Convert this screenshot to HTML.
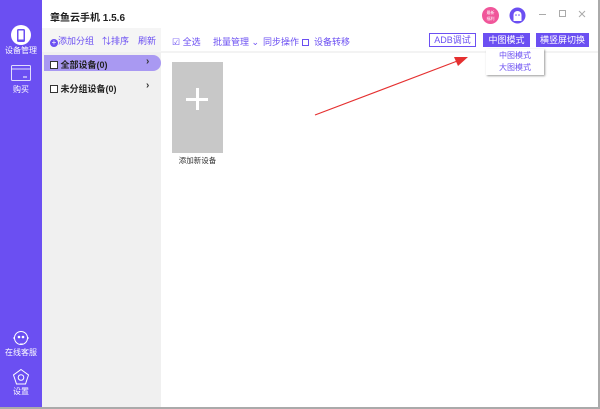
<!DOCTYPE html>
<html><head><meta charset="utf-8"><style>
*{margin:0;padding:0;box-sizing:border-box}
html,body{width:600px;height:409px;overflow:hidden}
body{position:relative;background:#fff;font-family:"Liberation Sans","Noto Sans CJK SC",sans-serif;font-size:9px;color:#333}
.abs{position:absolute}
.side{left:0;top:0;width:42px;height:409px;background:#6b4ff2}
.st{position:absolute;left:0;width:42px;text-align:center;color:#fff;font-size:8px}
.panel{left:42px;top:52px;width:119px;height:357px;background:#f0f0f0}
.tb{color:#6b4ff2;font-size:9px;white-space:nowrap}
.btn{font-size:9px;text-align:center;line-height:12px;height:14px}
</style></head><body>
<div class="abs side"></div>
<svg class="abs" style="left:10px;top:24px" width="22" height="22" viewBox="0 0 22 22"><circle cx="11" cy="11" r="10" fill="#fff"/><rect x="7" y="5" width="8" height="13" rx="1.5" fill="#6b4ff2"/><rect x="8.5" y="6.5" width="5" height="9" fill="#fff"/></svg>
<div class="st" style="top:45px">设备管理</div>
<svg class="abs" style="left:11px;top:65px" width="20" height="16" viewBox="0 0 20 16"><rect x="0.5" y="0.5" width="19" height="15" rx="1" fill="none" stroke="#fff" stroke-opacity=".8"/><line x1="0.5" y1="4" x2="19.5" y2="4" stroke="#fff" stroke-opacity=".8"/><line x1="12" y1="12" x2="16" y2="12" stroke="#fff"/></svg>
<div class="st" style="top:84px">购买</div>
<svg class="abs" style="left:12px;top:329px" width="18" height="18" viewBox="0 0 18 18" fill="none" stroke="#fff"><circle cx="9" cy="9" r="6.5"/><path d="M2 10v-2M16 10v-2"/><circle cx="7" cy="8" r=".8" fill="#fff"/><circle cx="11" cy="8" r=".8" fill="#fff"/><path d="M8 15h3"/></svg>
<div class="st" style="top:347px">在线客服</div>
<svg class="abs" style="left:12px;top:368px" width="18" height="18" viewBox="0 0 18 18" fill="none" stroke="#fff"><path d="M9 1.5 16.5 7 13.5 16H4.5L1.5 7Z"/><circle cx="9" cy="9.5" r="2.8"/></svg>
<div class="st" style="top:386px">设置</div>

<div class="abs" style="left:50px;top:9px;font-size:10px;font-weight:bold;color:#222">章鱼云手机 1.5.6</div>
<div class="abs" style="left:482px;top:7px;width:17px;height:17px;border-radius:50%;background:#f0569a;color:#fff;font-size:4px;text-align:center;line-height:6px;padding-top:3px">最新<br>福利</div>
<svg class="abs" style="left:509px;top:7px" width="17" height="17" viewBox="0 0 17 17"><circle cx="8.5" cy="8.5" r="8" fill="#6b4ff2"/><path d="M4.5 14V8a4 4 0 0 1 8 0v6Z" fill="#fff"/><circle cx="7" cy="8" r=".8" fill="#6b4ff2"/><circle cx="10" cy="8" r=".8" fill="#6b4ff2"/></svg>
<div class="abs" style="left:539px;top:14px;width:7px;height:1px;background:#aaa"></div>
<div class="abs" style="left:559px;top:10px;width:7px;height:7px;border:1px solid #aaa"></div>
<svg class="abs" style="left:578px;top:10px" width="8" height="8"><path d="M1 1 7 7M7 1 1 7" stroke="#aaa"/></svg>

<div class="abs" style="left:42px;top:28px;width:119px;height:24px;background:#f5f5f5"></div>
<div class="abs tb" style="left:50px;top:34px"><span style="display:inline-block;width:8px;height:8px;border-radius:50%;background:#6b4ff2;color:#fff;font-size:8px;line-height:8px;text-align:center;vertical-align:-1px">+</span>添加分组</div>
<div class="abs tb" style="left:102px;top:34px">⇅排序</div>
<div class="abs tb" style="left:138px;top:34px">刷新</div>
<div class="abs panel"></div>
<div class="abs" style="left:44px;top:55px;width:117px;height:16px;background:#a999f2;border-radius:0 8px 8px 0"></div>
<div class="abs" style="left:50px;top:58px;font-size:9px;font-weight:bold;color:#222;white-space:nowrap"><span style="display:inline-block;width:8px;height:8px;border:1px solid #333;vertical-align:-1px;background:#fff"></span> 全部设备(0)</div>
<div class="abs" style="left:146px;top:56px;font-weight:bold;font-size:10px">›</div>
<div class="abs" style="left:50px;top:82px;font-size:9px;font-weight:bold;color:#222;white-space:nowrap"><span style="display:inline-block;width:8px;height:8px;border:1px solid #333;vertical-align:-1px;background:#fff"></span> 未分组设备(0)</div>
<div class="abs" style="left:146px;top:80px;font-weight:bold;font-size:10px">›</div>

<div class="abs" style="left:161px;top:51px;width:437px;height:2px;background:#f3f3f3"></div>
<div class="abs tb" style="left:172px;top:35px">☑ 全选</div>
<div class="abs tb" style="left:213px;top:35px">批量管理 ⌄</div>
<div class="abs tb" style="left:263px;top:35px">同步操作 <span style="display:inline-block;width:7px;height:7px;border:1px solid #6b4ff2;vertical-align:-1px"></span></div>
<div class="abs tb" style="left:314px;top:35px">设备转移</div>
<div class="abs btn" style="left:429px;top:33px;width:47px;border:1px solid #6b4ff2;color:#6b4ff2">ADB调试</div>
<div class="abs btn" style="left:483px;top:33px;width:47px;background:#6b4ff2;color:#fff;line-height:14px">中图模式</div>
<div class="abs btn" style="left:536px;top:33px;width:53px;background:#6b4ff2;color:#fff;line-height:14px">横竖屏切换</div>
<div class="abs" style="left:486px;top:49px;width:58px;height:26px;background:#fff;box-shadow:1px 1px 2px #999;font-size:8px;color:#6b4ff2;text-align:center;line-height:12px;padding-top:1px">中图模式<br>大图模式</div>

<svg class="abs" style="left:300px;top:48px" width="180" height="70"><line x1="15" y1="67" x2="160" y2="12" stroke="#e53030" stroke-width="1.2"/><path d="M168 9 154 9 158 18Z" fill="#e53030"/></svg>

<div class="abs" style="left:172px;top:62px;width:51px;height:91px;background:#c8c8c8"></div>
<div class="abs" style="left:186px;top:98px;width:22px;height:3px;background:#fff"></div>
<div class="abs" style="left:196px;top:88px;width:3px;height:22px;background:#fff"></div>
<div class="abs" style="left:172px;top:155px;width:51px;text-align:center;font-size:7.5px;color:#333">添加新设备</div>

<div class="abs" style="left:598px;top:0;width:2px;height:409px;background:#aaa"></div>
<div class="abs" style="left:0;top:407px;width:600px;height:2px;background:#aaa"></div>
</body></html>
